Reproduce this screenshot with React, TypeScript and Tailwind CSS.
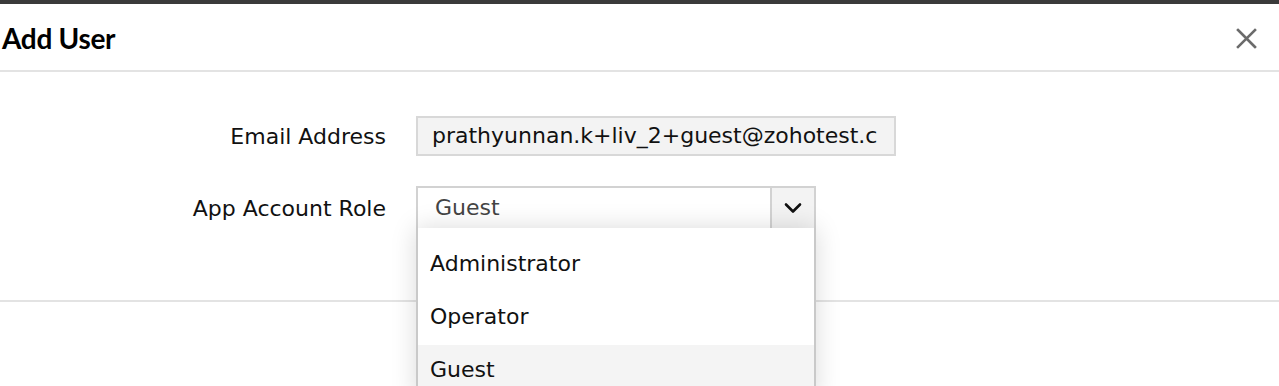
import { useState } from 'react'

const roles = ['Administrator', 'Operator', 'Guest']

function Chevron() {
  return (
    <svg width="18" height="12" viewBox="0 0 18 12" fill="none">
      <path d="M2 2.5l7 7 7-7" stroke="#111" strokeWidth="2.6" strokeLinecap="round" strokeLinejoin="round" />
    </svg>
  )
}

export default function App() {
  const [role] = useState('Guest')

  return (
    <div className="w-[1279px] h-[386px] overflow-hidden bg-white relative font-['DejaVu_Sans',Verdana,sans-serif] text-[#111]">
      <div className="h-[4px] bg-[#3a3a3a]" />
      {/* header */}
      <div className="h-[68px] flex items-center justify-between pl-[2px] pr-[22px] border-b-2 border-[#e3e3e3]">
        <h1 className="font-['Lato',sans-serif] font-bold text-[28px] tracking-[-0.3px] text-black mt-[2px]">Add User</h1>
        <button className="w-[22px] h-[22px] flex items-center justify-center mt-[2px]">
          <svg width="21" height="21" viewBox="0 0 21 21">
            <path d="M2 2l17 17M19 2L2 19" stroke="#6b6b6b" strokeWidth="2.6" strokeLinecap="square" />
          </svg>
        </button>
      </div>

      {/* form */}
      <div className="h-[230px] border-b-2 border-[#e3e3e3] pt-[44px]">
        <div className="flex items-center">
          <label className="w-[386px] text-right text-[22px]">Email Address</label>
          <div className="ml-[30px] w-[480px] h-[40px] bg-[#f3f3f3] border-2 border-[#d8d8d8] pl-[14px] text-[22px] leading-[36px] overflow-hidden whitespace-nowrap">
            prathyunnan.k+liv_2+guest@zohotest.c
          </div>
        </div>

        <div className="flex items-center mt-[30px]">
          <label className="w-[386px] text-right text-[22px]">App Account Role</label>
          <div className="ml-[30px] relative w-[400px]">
            <div className="h-[44px] flex border-2 border-[#d2d2d2] bg-white">
              <div className="flex-1 pl-[17px] text-[22px] leading-[40px] text-[#444]">{role}</div>
              <div className="w-[44px] border-l-2 border-[#d2d2d2] bg-[#f3f3f3] flex items-center justify-center">
                <Chevron />
              </div>
            </div>
            <ul className="absolute left-0 top-[42px] w-[400px] bg-white border-2 border-t-0 border-[#c9c9c9] pt-[11px] shadow-[0_0_24px_rgba(0,0,0,0.15)] z-10">
              {roles.map((r) => (
                <li
                  key={r}
                  className={`h-[53px] pl-[12px] text-[22px] leading-[49px] ${r === role ? 'bg-[#f4f4f4]' : ''}`}
                >
                  {r}
                </li>
              ))}
            </ul>
          </div>
        </div>
      </div>
    </div>
  )
}
